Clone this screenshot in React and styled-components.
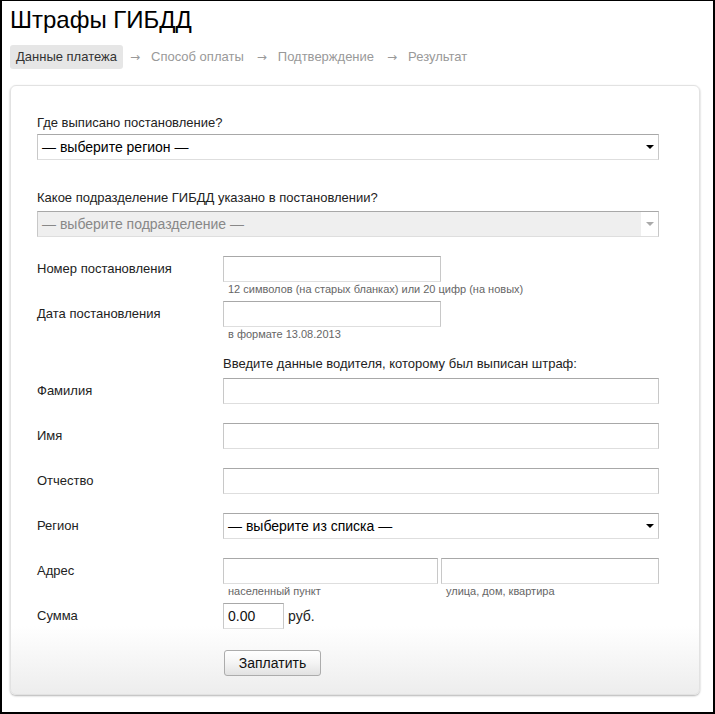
import React from 'react';
import styled, { createGlobalStyle } from 'styled-components';

const GlobalStyle = createGlobalStyle`
  html, body {
    margin: 0;
    padding: 0;
    background: #fff;
  }
  body {
    font-family: "Liberation Sans", Arial, sans-serif;
    color: #000;
  }
`;

const Frame = styled.div`
  box-sizing: border-box;
  width: 715px;
  height: 714px;
  border: 2px solid #000;
  border-top-width: 1px;
  padding: 0 0 0 8px;
`;

const Title = styled.h1`
  margin: 0;
  padding-top: 5px;
  font-size: 24px;
  font-weight: normal;
  line-height: 28px;
  color: #000;
`;

const Steps = styled.div`
  display: flex;
  align-items: center;
  margin-top: 11px;
  font-size: 13px;
`;

const Step = styled.span`
  padding: 5px 6px;
  line-height: 14px;
  border-radius: 3px;
  color: ${(p) => (p.$active ? '#333' : '#999')};
  background: ${(p) => (p.$active ? '#e6e6e6' : 'transparent')};
`;

const Arrow = styled.span`
  color: #999;
  margin: 0 5px 0 7px;
  font-family: "DejaVu Sans", sans-serif;
  font-size: 12px;
`;

const Card = styled.div`
  box-sizing: border-box;
  width: 690px;
  margin-top: 16px;
  border: 1px solid #e2e2e2;
  border-radius: 6px;
  box-shadow: 0 1px 2px rgba(0, 0, 0, 0.3);
  background: linear-gradient(to bottom, #fff 0, #fff 540px, #ededed 100%);
  padding: 29px 40px 18px 26px;
`;

const Label = styled.div`
  font-size: 13px;
  line-height: 16px;
  color: #222;
  margin-bottom: ${(p) => p.$mb || 0}px;
  margin-top: ${(p) => p.$mt || 0}px;
  padding-left: ${(p) => p.$indent || 0}px;
`;

const SelectBox = styled.div`
  box-sizing: border-box;
  position: relative;
  display: flex;
  align-items: center;
  width: ${(p) => p.$width || 622}px;
  height: 26px;
  padding: 0 4px;
  border: 1px solid #c8c8c8;
  border-top-color: #a8a8a8;
  border-bottom-color: #dedede;
  background: ${(p) => (p.$disabled ? '#efefef' : '#fff')};
  color: ${(p) => (p.$disabled ? '#888' : '#000')};
  font-size: 14px;
`;

const Caret = styled.span`
  position: absolute;
  right: 0;
  top: 0;
  bottom: 0;
  width: 17px;
  background: #fff;
  &::after {
    content: '';
    position: absolute;
    right: 4px;
    top: 10px;
    border-left: 4px solid transparent;
    border-right: 4px solid transparent;
    border-top: 4px solid ${(p) => (p.$disabled ? '#aaa' : '#000')};
  }
`;

const Row = styled.div`
  display: flex;
  margin-top: ${(p) => p.$mt || 0}px;
`;

const RowLabel = styled.div`
  width: 186px;
  flex-shrink: 0;
  font-size: 13px;
  line-height: 26px;
  color: #222;
`;

const Field = styled.div`
  display: flex;
  flex-direction: column;
`;

const Fields = styled.div`
  display: flex;
  gap: 3px;
`;

const Input = styled.div`
  box-sizing: border-box;
  width: ${(p) => p.$width}px;
  height: 26px;
  border: 1px solid #c8c8c8;
  border-top-color: #a8a8a8;
  border-bottom-color: #dedede;
  background: #fff;
  font-size: 14px;
  line-height: 24px;
  padding: 0 4px;
  color: #111;
`;

const Hint = styled.div`
  font-size: 11px;
  line-height: 14px;
  color: #666;
  padding-left: 5px;
`;

const Unit = styled.span`
  font-size: 14px;
  line-height: 26px;
  margin-left: 4px;
  color: #222;
`;

const Button = styled.button`
  box-sizing: border-box;
  margin-top: 21px;
  margin-left: 187px;
  width: 97px;
  height: 26px;
  border: 1px solid #acacac;
  border-radius: 3px;
  background: linear-gradient(to bottom, #fff 0%, #f4f4f4 50%, #e2e2e2 100%);
  font-family: "Liberation Sans", Arial, sans-serif;
  font-size: 14px;
  color: #111;
  padding: 0;
`;

const FormRow = ({ label, mt = 19, width = 436, hint, value, children }) => (
  <Row $mt={mt}>
    <RowLabel>{label}</RowLabel>
    {children || (
      <Field>
        <Input $width={width}>{value}</Input>
        {hint && <Hint>{hint}</Hint>}
      </Field>
    )}
  </Row>
);

export default function App() {
  return (
    <>
      <GlobalStyle />
      <Frame>
        <Title>Штрафы ГИБДД</Title>
        <Steps>
          <Step $active>Данные платежа</Step>
          <Arrow>→</Arrow>
          <Step>Способ оплаты</Step>
          <Arrow>→</Arrow>
          <Step>Подтверждение</Step>
          <Arrow>→</Arrow>
          <Step>Результат</Step>
        </Steps>

        <Card>
          <Label $mb={3}>Где выписано постановление?</Label>
          <SelectBox>
            — выберите регион —
            <Caret />
          </SelectBox>

          <Label $mt={30} $mb={5}>Какое подразделение ГИБДД указано в постановлении?</Label>
          <SelectBox $disabled>
            — выберите подразделение —
            <Caret $disabled />
          </SelectBox>

          <FormRow
            label="Номер постановления"
            width={218}
            hint="12 символов (на старых бланках) или 20 цифр (на новых)"
          />
          <FormRow label="Дата постановления" mt={5} width={218} hint="в формате 13.08.2013" />

          <Label $mt={15} $indent={186}>
            Введите данные водителя, которому был выписан штраф:
          </Label>

          <FormRow label="Фамилия" mt={6} />
          <FormRow label="Имя" />
          <FormRow label="Отчество" />
          <FormRow label="Регион">
            <SelectBox $width={436}>
              — выберите из списка —
              <Caret />
            </SelectBox>
          </FormRow>
          <FormRow label="Адрес">
            <Fields>
              <Field>
                <Input $width={215} />
                <Hint>населенный пункт</Hint>
              </Field>
              <Field>
                <Input $width={218} />
                <Hint>улица, дом, квартира</Hint>
              </Field>
            </Fields>
          </FormRow>
          <FormRow label="Сумма" mt={5}>
            <Input $width={61}>0.00</Input>
            <Unit>руб.</Unit>
          </FormRow>

          <Button>Заплатить</Button>
        </Card>
      </Frame>
    </>
  );
}
